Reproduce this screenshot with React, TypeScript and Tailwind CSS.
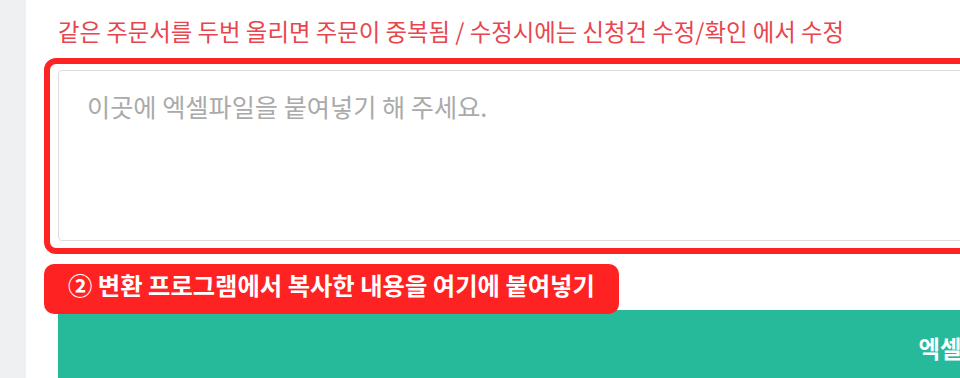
import React from 'react';

const notice = '같은 주문서를 두번 올리면 주문이 중복됨 / 수정시에는 신청건 수정/확인 에서 수정';

export default function App() {
  return (
    <div className="flex h-[378px] w-[960px] overflow-hidden bg-white font-['Noto_Sans_CJK_KR','Noto_Sans',sans-serif]">
      <div className="w-[26px] shrink-0 bg-[#eef0f2]" />

      <div className="min-w-0 flex-1 pl-[18px] pt-[15px]">
        <p className="ml-[14px] whitespace-nowrap text-[23.4px] leading-[32px] text-[#e8464e]">{notice}</p>

        {/* 붙여넣기 영역 */}
        <div className="mt-[11px] w-[1800px] rounded-[12px] border-[6px] border-[#ff2222] pb-[7px] pl-[8px] pr-[8px] pt-[6px]">
          <textarea
            placeholder="이곳에 엑셀파일을 붙여넣기 해 주세요."
            className="block h-[171px] w-full resize-none rounded-[4px] border border-[#dddddd] bg-white px-[28px] pt-[17px] text-[25.2px] leading-[36px] text-[#555] outline-none placeholder:text-[#aaaaaa]"
          />
        </div>

        <div className="relative z-10 mt-[10px] inline-flex h-[50px] items-center whitespace-nowrap rounded-[10px] bg-[#ff2222] px-[24px] pb-[8px] text-[24.3px] font-bold text-white">
          ② 변환 프로그램에서 복사한 내용을 여기에 붙여넣기
        </div>

        <button className="-mt-[4px] ml-[14px] flex h-[80px] w-[1834px] items-start justify-center bg-[#26b99a] pt-[22px] text-[23.4px] font-semibold leading-[32px] text-white">
          엑셀 업로드
        </button>
      </div>
    </div>
  );
}
